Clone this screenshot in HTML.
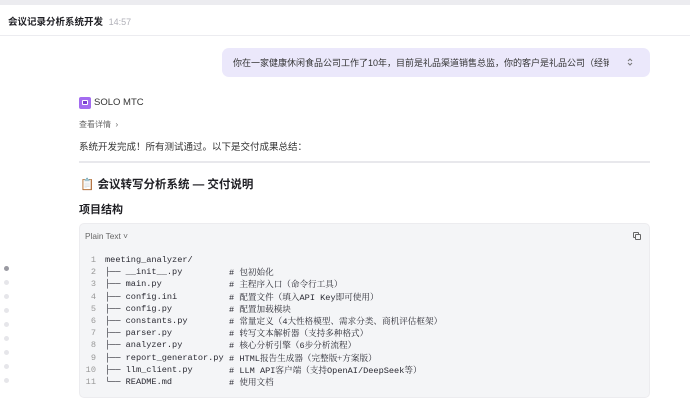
<!DOCTYPE html>
<html><head><meta charset="utf-8"><style>
*{margin:0;padding:0;box-sizing:border-box}
body{width:690px;height:406px;overflow:hidden;background:#fff;font-family:"Liberation Sans","Noto Sans CJK SC",sans-serif;color:#1f1f24;position:relative}
.a{position:absolute;white-space:nowrap}
.mono{font-family:"Liberation Mono","Noto Sans CJK SC",monospace;font-size:8.6px;color:#2a2a33}
.mono div{height:12.2px;line-height:12.2px;overflow:visible}
.cm{font-family:"Noto Serif CJK SC","Liberation Mono",serif;}
.dot{position:absolute;left:4px;width:5px;height:5px;border-radius:50%;background:#e6e6ea}
</style></head><body>
<div class="a" style="left:0;top:0;width:690px;height:5px;background:#ececf0"></div>
<div class="a" style="left:0;top:5px;width:690px;height:31px;border-bottom:1px solid #ececf0;border-radius:6px 6px 0 0"></div>
<div class="a" style="left:8px;top:14px;font-size:9.5px;font-weight:bold">会议记录分析系统开发 <span style="font-weight:normal;color:#b0b0b8;font-size:9px;margin-left:3px">14:57</span></div>

<div class="a" style="left:222px;top:48px;width:428px;height:29px;background:#ebe8fb;border-radius:7px"></div>
<div class="a" style="left:233px;top:56px;width:376px;overflow:hidden;font-size:9px;color:#333">你在一家健康休闲食品公司工作了10年，目前是礼品渠道销售总监，你的客户是礼品公司（经销</div>
<svg class="a" style="left:626px;top:57px" width="8" height="10" viewBox="0 0 8 10"><path d="M2 4 L4 2 L6 4 M2 6 L4 8 L6 6" fill="none" stroke="#777" stroke-width="1"/></svg>

<div class="a" style="left:79px;top:97px;width:12px;height:12px;background:#a36cf0;border-radius:2px"></div>
<div class="a" style="left:82px;top:100px;width:6px;height:5px;border:1px solid #fff;border-radius:1px;background:#7a3fd0"></div>
<div class="a" style="left:94px;top:97px;font-size:9.5px;color:#333">SOLO MTC</div>
<div class="a" style="left:79px;top:119px;font-size:8px;color:#666">查看详情 &nbsp;›</div>
<div class="a" style="left:79px;top:139px;font-size:9.5px;color:#333">系统开发完成！所有测试通过。以下是交付成果总结：</div>
<div class="a" style="left:79px;top:161px;width:571px;height:2px;background:#e8e8ec"></div>
<div class="a" style="left:80px;top:176px;font-size:11.5px;font-weight:bold">📋 会议转写分析系统 — 交付说明</div>
<div class="a" style="left:79px;top:201px;font-size:11px;font-weight:bold">项目结构</div>

<div class="a" style="left:79px;top:223px;width:571px;height:175px;background:#f4f5f7;border:1px solid #ececef;border-radius:5px"></div>
<div class="a" style="left:85px;top:231px;font-size:8.3px;color:#666">Plain Text ˅</div>
<div class="a" style="left:633px;top:232px;width:6px;height:6px;border:1px solid #666;border-radius:1px;background:#f4f5f7"></div>
<div class="a" style="left:635px;top:234px;width:6px;height:6px;border:1px solid #666;border-radius:1px;background:#f4f5f7"></div>

<div class="a mono" style="left:84px;top:254px;width:12px;text-align:right;color:#999"><div>1</div><div>2</div><div>3</div><div>4</div><div>5</div><div>6</div><div>7</div><div>8</div><div>9</div><div>10</div><div>11</div></div>
<div class="a mono" style="left:105px;top:254px"><div>meeting_analyzer/</div><div>├── __init__.py</div><div>├── main.py</div><div>├── config.ini</div><div>├── config.py</div><div>├── constants.py</div><div>├── parser.py</div><div>├── analyzer.py</div><div>├── report_generator.py</div><div>├── llm_client.py</div><div>└── README.md</div></div>
<div class="a mono" style="left:229px;top:254px"><div></div><div># <span class="cm">包初始化</span></div><div># <span class="cm">主程序入口（命令行工具）</span></div><div># <span class="cm">配置文件（填入</span>API Key<span class="cm">即可使用）</span></div><div># <span class="cm">配置加载模块</span></div><div># <span class="cm">常量定义（</span>4<span class="cm">大性格模型、需求分类、商机评估框架）</span></div><div># <span class="cm">转写文本解析器（支持多种格式）</span></div><div># <span class="cm">核心分析引擎（</span>6<span class="cm">步分析流程）</span></div><div># HTML<span class="cm">报告生成器（完整版+方案版）</span></div><div># LLM API<span class="cm">客户端（支持</span>OpenAI/DeepSeek<span class="cm">等）</span></div><div># <span class="cm">使用文档</span></div></div>

<div class="dot" style="top:266px;background:#9a9aa2"></div>
<div class="dot" style="top:280px"></div>
<div class="dot" style="top:294px"></div>
<div class="dot" style="top:308px"></div>
<div class="dot" style="top:322px"></div>
<div class="dot" style="top:336px"></div>
<div class="dot" style="top:350px"></div>
<div class="dot" style="top:364px"></div>
<div class="dot" style="top:378px"></div>
</body></html>
